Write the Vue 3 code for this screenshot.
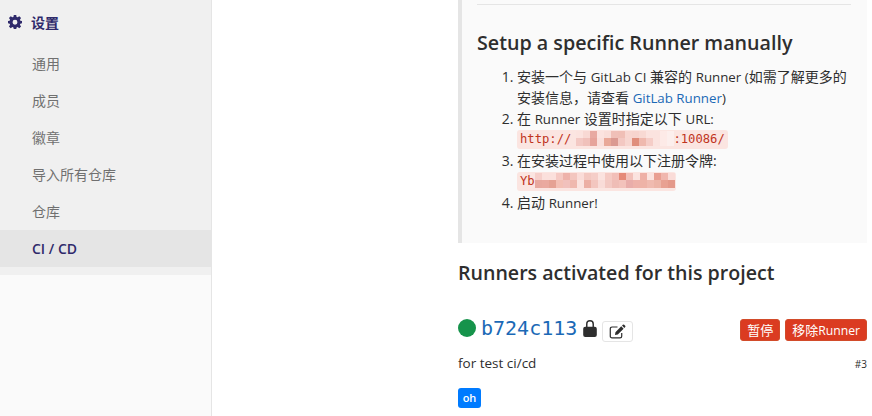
<script setup>
const navItems = ['通用', '成员', '徽章', '导入所有仓库', '仓库']
const urlColors = [
  '#fbe3df','#f8d9d4','#e8aaa2','#fbe3df','#f9ded9','#f0c0b8','#f0bfb6','#f8d6d0','#f7d4ce','#f8d9d3','#fbe3df','#fbe3df','#fdeae7','#fcefed',
  '#f3c9c4','#f0c1bb','#e6a39a','#fadfdb','#e9a898','#db9a92','#f3c8c2','#f7d6d0','#e08e7c','#efb9ae','#f5cdc7','#fbe3df','#fdeae7','#fcefed'
]
const tokenColors = [
  '#f6cfca','#fbe0dc','#fbe0dc','#f5c9c3','#eeb2aa','#f3c6bf','#fadcd8','#f3c8c1','#f5cec8','#fbe3df','#f5cbc4','#f2bfb8','#e58a78','#f2c1ba','#fbe3df','#eeb0a6','#fbe3df','#e99f92','#f0b7ae','#fadcd8',
  '#e8a89e','#eaa99f','#e5a294','#f3c0b5','#f1c1bc','#efb8ae','#fbe3df','#ecafa4','#f3c6bf','#f9dcd8','#f3c9c3','#efbdb6','#f3c2bb','#e9adaa','#eeb2aa','#eeb3a7','#f0bbb0','#edb5a8','#e8a192','#e4998a'
]
</script>

<template>
  <div class="page">
    <aside class="sidebar">
      <div class="nav">
        <div class="nav-title">
          <svg class="gear" viewBox="0 0 16 16" width="14" height="14">
            <path fill="#2f2a6b" fill-rule="evenodd" d="M6.6 0h2.8l.4 2.2 1.2.5L12.9 1.4 14.9 3.4 13.6 5.3l.5 1.2L16 6.9v2.6l-1.9.4-.5 1.2 1.3 1.9-2 2-1.9-1.3-1.2.5-.4 2.2H6.6l-.4-2.2-1.2-.5-1.9 1.3-2-2 1.3-1.9-.5-1.2L0 9.500V6.900l1.900-.4.5-1.200L1.100 3.400l2-2L5 2.700l1.200-.5zM8 5.400a2.800 2.800 0 1 0 0 5.600 2.800 2.800 0 0 0 0-5.600z"/>
          </svg>
          <span>设置</span>
        </div>
        <div class="nav-item" v-for="item in navItems" :key="item">{{ item }}</div>
        <div class="nav-item active">CI / CD</div>
      </div>
    </aside>

    <main class="main">
      <section class="panel">
        <hr class="rule" />
        <h3 class="panel-title">Setup a specific Runner manually</h3>
        <ol class="steps">
          <li>安装一个与 <span class="lat">GitLab CI</span> 兼容的 <span class="lat">Runner (</span>如需了解更多的安装信息，请查看 <a class="lat">GitLab Runner</a><span class="lat">)</span></li>
          <li>在 <span class="lat">Runner</span> 设置时指定以下 <span class="lat">URL:</span><br />
            <code class="code url">http://<span class="mosaic url-mosaic"><i v-for="(c, n) in urlColors" :key="n" :style="{ background: c }"></i></span>:10086/</code>
          </li>
          <li>在安装过程中使用以下注册令牌:<br />
            <code class="code token">Yb<span class="mosaic token-mosaic"><i v-for="(c, n) in tokenColors" :key="n" :style="{ background: c }"></i></span></code>
          </li>
          <li>启动 <span class="lat">Runner!</span></li>
        </ol>
      </section>

      <h3 class="section-title">Runners activated for this project</h3>

      <div class="runner-head">
        <span class="status"></span>
        <a class="runner-id">b724c113</a>
        <svg class="lock" viewBox="1 1 12 15" width="14" height="17">
          <path fill="#2e2e2e" d="M3.500 7V4.600a3.500 3.500 0 0 1 7 0V7h.7A1.800 1.800 0 0 1 13 8.800v5.400a1.800 1.800 0 0 1-1.800 1.800H2.800A1.800 1.800 0 0 1 1 14.200V8.800A1.800 1.800 0 0 1 2.800 7zm1.300 0h4.400V4.600a2.200 2.200 0 0 0-4.400 0z"/>
        </svg>
        <button class="edit">
          <svg viewBox="0 0 18 16" width="17" height="15">
            <path fill="none" stroke="#2e2e2e" stroke-width="1.300" d="M13.500 9.500v3.500a1.800 1.800 0 0 1-1.800 1.800H3.100a1.800 1.800 0 0 1-1.800-1.800V5a1.800 1.800 0 0 1 1.800-1.800H9"/>
            <path fill="#2e2e2e" d="M6.800 8.700 13 2.500l2.500 2.500-6.200 6.200-3 .5zM13.800 1.700l.9-.9a1 1 0 0 1 1.400 0l1.100 1.100a1 1 0 0 1 0 1.400l-.9.9z"/>
          </svg>
        </button>
        <div class="actions">
          <button class="btn">暂停</button>
          <button class="btn">移除<span class="btn-lat">Runner</span></button>
        </div>
      </div>

      <div class="runner-desc">
        <span>for test ci/cd</span>
        <small>#3</small>
      </div>

      <span class="tag">oh</span>
    </main>
  </div>
</template>

<style>
html, body { margin: 0; background: #fff; overflow: hidden; }
</style>

<style scoped>
.page {
  width: 872px;
  height: 416px;
  display: flex;
  overflow: hidden;
  font-family: "Open Sans", "Noto Sans CJK SC", sans-serif;
  font-size: 14px;
  color: #2e2e2e;
}
.sidebar {
  width: 211px;
  flex: none;
  background: #fafafa;
  border-right: 1px solid #e5e5e5;
}
.nav {
  height: 275px;
  box-sizing: border-box;
  padding-top: 3px;
  background: #f0f0f0;
}
.nav-title {
  height: 37px;
  margin-bottom: 5px;
  display: flex;
  align-items: center;
  padding-left: 8px;
  gap: 9px;
  font-weight: 700;
  color: #2f2a6b;
}
.gear { flex: none; }
.nav-item {
  height: 37px;
  line-height: 37px;
  padding-left: 32px;
  color: #707070;
}
.nav-item.active {
  background: #e5e5e5;
  color: #2f2a6b;
  font-weight: 600;
}
.main {
  width: 409px;
  margin-left: 246px;
  flex: none;
}
.panel {
  height: 243px;
  box-sizing: border-box;
  border-left: 4px solid #e5e5e5;
  background: #fafafa;
  padding: 4px 16px 0 15px;
}
.rule {
  margin: 0;
  border: 0;
  border-top: 1px solid #e5e5e5;
}
.panel-title {
  margin: 0;
  padding-top: 24px;
  font-size: 19.700px;
  line-height: 28px;
  font-weight: 600;
}
.steps {
  margin: 9px 0 0;
  padding-left: 40px;
  line-height: 21px;
}
.lat { font-size: 13.300px; line-height: 1; }
.steps a { color: #1b69b6; }
.code {
  display: inline-block;
  height: 19px;
  line-height: 19px;
  padding: 0 3px;
  border-radius: 3px;
  background: #fbe5e1;
  color: #c0341d;
  font-family: "DejaVu Sans Mono", "Liberation Mono", monospace;
  font-size: 12.200px;
  vertical-align: top;
  margin-top: 1px;
  white-space: nowrap;
}
.mosaic {
  display: inline-grid;
  grid-template-rows: 7px 8px;
  height: 15px;
  margin-top: 1px;
  vertical-align: top;
}
.mosaic i { display: block; }
.url-mosaic {
  width: 98px;
  grid-template-columns: repeat(14, 7px);
  margin-left: 5px;
  margin-right: -1px;
}
.token-mosaic {
  width: 140px;
  grid-template-columns: repeat(20, 7px);
  margin-right: -2px;
}
.section-title {
  margin: 16px 0 0;
  font-size: 19.600px;
  line-height: 28px;
  font-weight: 600;
}
.runner-head {
  display: flex;
  align-items: center;
  margin-top: 27px;
  height: 28px;
}
.status {
  width: 18px;
  height: 18px;
  border-radius: 50%;
  background: #16934b;
}
.runner-id {
  margin-left: 5px;
  font-family: "DejaVu Sans Mono", monospace;
  font-size: 20px;
  color: #1b69b6;
}
.lock { margin-left: 6px; }
.edit {
  width: 31px;
  height: 21px;
  margin: 7px 0 0 5px;
  padding: 0;
  display: flex;
  align-items: center;
  justify-content: center;
  background: #fff;
  border: 1px solid #e5e5e5;
  border-radius: 3px;
}
.actions {
  margin: 4px 0 0 auto;
  display: flex;
  gap: 5px;
}
.btn {
  height: 22px;
  padding: 0 6px;
  border: 1px solid #d24b2a;
  border-radius: 3px;
  background: #db3b21;
  color: #fff;
  font-family: inherit;
  font-size: 13px;
  line-height: 20px;
}
.btn-lat { font-size: 12.200px; }
.runner-desc {
  display: flex;
  justify-content: space-between;
  align-items: baseline;
  margin-top: 12px;
  line-height: 19px;
  font-size: 13.500px;
}
.runner-desc small { font-size: 10px; }
.tag {
  display: inline-block;
  margin-top: 14px;
  width: 23px;
  height: 20px;
  line-height: 20px;
  text-align: center;
  background: #007bff;
  color: #fff;
  border-radius: 3px;
  font-size: 11px;
  font-weight: 600;
}
</style>
